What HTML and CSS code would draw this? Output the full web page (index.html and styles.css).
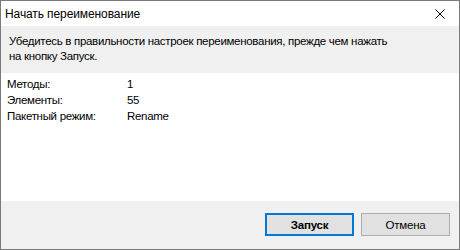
FILE: index.html
```html
<!DOCTYPE html>
<html lang="ru">
<head>
<meta charset="utf-8">
<title>Начать переименование</title>
<link rel="stylesheet" href="styles.css">
</head>
<body>
<div class="window">
  <div class="titlebar">
    <span class="title">Начать переименование</span>
    <span class="close">
      <svg width="10" height="10" viewBox="0 0 10 10"><path d="M0.5 0.5L9.5 9.5M9.5 0.5L0.5 9.5" stroke="#000" stroke-width="1" fill="none"/></svg>
    </span>
  </div>
  <div class="banner">Убедитесь в правильности настроек переименования, прежде чем нажать<br>на кнопку Запуск.</div>
  <div class="content">
    <div class="row"><span class="label">Методы:</span><span class="value">1</span></div>
    <div class="row"><span class="label">Элементы:</span><span class="value">55</span></div>
    <div class="row"><span class="label">Пакетный режим:</span><span class="value">Rename</span></div>
  </div>
  <div class="footer">
    <button class="btn primary">Запуск</button>
    <button class="btn">Отмена</button>
  </div>
</div>
</body>
</html>
```
FILE: styles.css
```css
html, body {
  margin: 0;
  padding: 0;
  background: #fff;
}
.window {
  box-sizing: border-box;
  width: 460px;
  height: 250px;
  border: 1px solid #7a7a7a;
  display: flex;
  flex-direction: column;
  font-family: "Liberation Sans", Arial, sans-serif;
  font-size: 11.5px;
  letter-spacing: -0.3px;
  color: #000;
  background: #fff;
}
.titlebar {
  height: 25px;
  display: flex;
  align-items: center;
  justify-content: space-between;
  padding: 0 14px 0 4px;
  flex: none;
}
.title {
  font-size: 12px;
  letter-spacing: -0.1px;
}
.close {
  display: flex;
  width: 10px;
  height: 10px;
}
.banner {
  background: #f0f0f0;
  padding: 8px 8px 9px 8px;
  line-height: 15px;
  height: 30px;
  flex: none;
}
.content {
  flex: 1;
  padding: 3px 6px 0 6px;
}
.row {
  display: flex;
  height: 16px;
  line-height: 16px;
}
.label {
  width: 120px;
}
.footer {
  flex: none;
  height: 48px;
  background: #f0f0f0;
  display: flex;
  justify-content: flex-end;
  align-items: flex-start;
  padding: 12px 9px 0 0;
  box-sizing: border-box;
  gap: 7px;
}
.btn {
  box-sizing: border-box;
  width: 89px;
  height: 23px;
  background: #e1e1e1;
  border: 1px solid #adadad;
  font-family: "Liberation Sans", Arial, sans-serif;
  font-size: 11.5px;
  letter-spacing: -0.2px;
  color: #000;
  padding: 0;
  margin: 0;
}
.btn.primary {
  border: 2px solid #0078d7;
  font-weight: bold;
}
```
